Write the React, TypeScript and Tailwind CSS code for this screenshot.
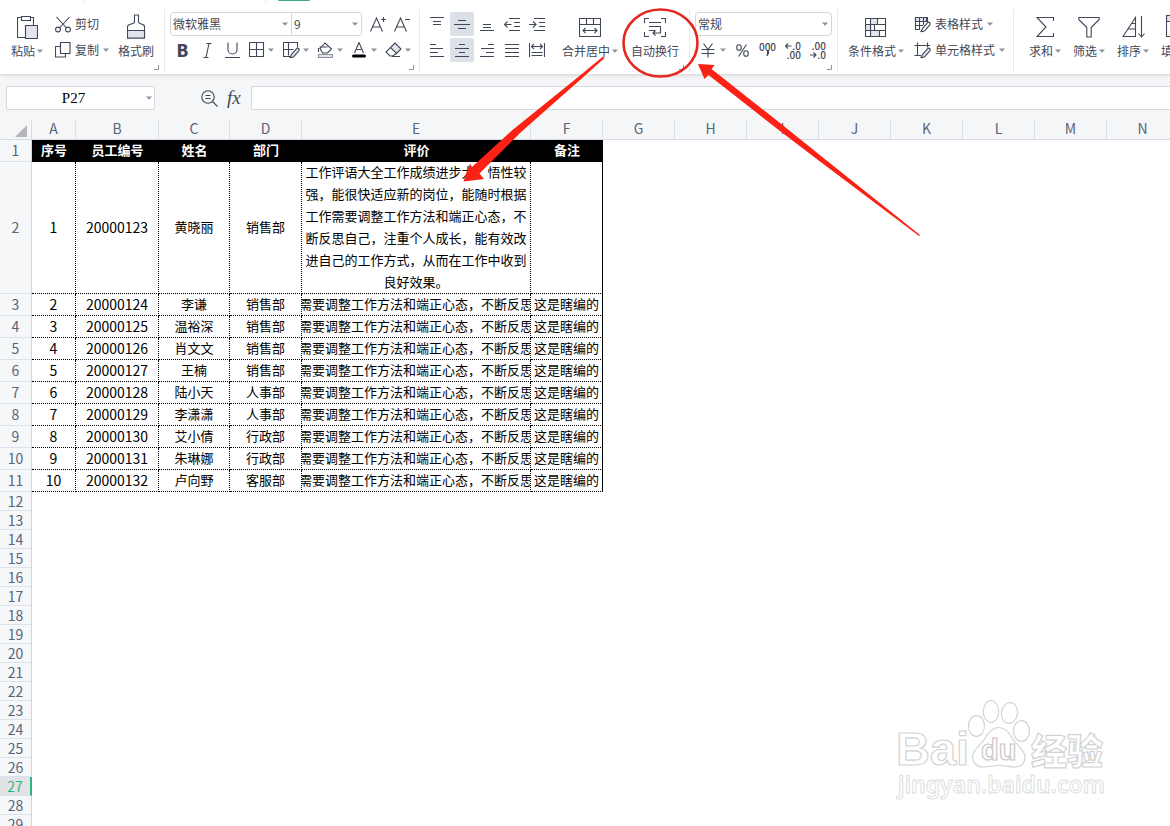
import type { ReactNode } from "react";

const fontStack = "font-['Noto_Sans_CJK_SC','Noto_Sans',sans-serif]";

function Icon({ w, h, children }: { w: number; h: number; children: ReactNode }) {
  return (
    <svg width={w} height={h} viewBox={`0 0 ${w} ${h}`} fill="none" stroke="#3f4858" strokeWidth="1.1" className="shrink-0" aria-hidden="true">
      {children}
    </svg>
  );
}

function Caret() {
  return (
    <svg width="6" height="4" viewBox="0 0 6 4" className="shrink-0" aria-hidden="true">
      <path d="M0 .5h6L3 3.8z" fill="#8b929d" />
    </svg>
  );
}

function Launcher() {
  return (
    <svg width="5" height="5" viewBox="0 0 5 5" className="absolute right-[5px] bottom-[2px]" aria-hidden="true">
      <path d="M0 4.5h4.5V0" fill="none" stroke="#8b929d" />
    </svg>
  );
}

function BigButton({ label, icon, caret = true }: { label: string; icon: ReactNode; caret?: boolean }) {
  return (
    <button type="button" className="flex shrink-0 flex-col items-center">
      <span className="flex h-[29px] items-center">{icon}</span>
      <span className="flex h-[20px] items-center gap-[2px] whitespace-nowrap">
        {label}
        {caret && <Caret />}
      </span>
    </button>
  );
}

function RowButton({ label, icon, caret = true }: { label: string; icon: ReactNode; caret?: boolean }) {
  return (
    <button type="button" className="flex h-6 items-center gap-[4px] whitespace-nowrap">
      {icon}
      {label}
      {caret && <Caret />}
    </button>
  );
}

function MenuIcon({ name, children }: { name: string; children: ReactNode }) {
  return (
    <button type="button" aria-label={name} className="flex h-6 w-[34px] items-center gap-[3px] pl-[4px]">
      {children}
      <Caret />
    </button>
  );
}

function Combo({ label, value, className }: { label: string; value: string; className: string }) {
  return (
    <label className={`grid h-6 items-center border border-[#d3d7dc] bg-white ${className}`}>
      <select aria-label={label} defaultValue={value} className="col-start-1 row-start-1 h-[22px] w-full appearance-none bg-transparent pl-[2px] text-[12px] outline-none">
        <option>{value}</option>
      </select>
      <span className="pointer-events-none col-start-1 row-start-1 mr-[3px] flex justify-self-end">
        <Caret />
      </span>
    </label>
  );
}

const alignments = [
  { name: "顶端对齐", d: "M1 1.5h14M4 5.5h8M4 8.5h8", on: false },
  { name: "垂直居中", d: "M4 4.5h8M0 8.5h16M4 12.5h8", on: true },
  { name: "底端对齐", d: "M4 8.5h8M4 11.5h8M1 14.5h14", on: false },
  { name: "减少缩进量", d: "M5 2.5h11M10 6.5h6M10 10.5h6M5 14.5h11M0.5 8.5h7M3.5 5.5l-3 3 3 3", on: false },
  { name: "增加缩进量", d: "M5 2.5h11M10 6.5h6M10 10.5h6M5 14.5h11M0 8.5h7M4 5.5l3 3-3 3", on: false },
  { name: "左对齐", d: "M1 2.5h6M1 6.5h13M1 10.5h8M1 14.5h14", on: false },
  { name: "水平居中", d: "M5 2.5h6M1 6.5h14M5 10.5h6M1 14.5h14", on: true },
  { name: "右对齐", d: "M9 2.5h6M2 6.5h13M7 10.5h8M1 14.5h14", on: false },
  { name: "两端对齐", d: "M1 2.5h14M1 6.5h14M1 10.5h14M1 14.5h14", on: false },
  { name: "分散对齐", d: "M.5 1v14M15.5 1v14M2.5 4.5h11M5 2l-2.5 2.5L5 7M11 2l2.5 2.5L11 7M2.5 10.5h11M2.5 13.5h11", on: false },
];

const penShape = "M15.5 6.5c1 .8.8 1.6.3 2.3l-4.8 5.5c-1.2 1.3-2.8 1.4-4 1.2.9-1 .8-2.2 1.8-3.3l4.6-5.3c.7-.8 1.4-1 2.1-.4z";

function Ribbon() {
  return (
    <header className="relative z-10 shrink-0 bg-white text-[12px] leading-[20px] text-[#3f4858] shadow-[0_1px_4px_rgba(0,0,0,0.16)]">
      <div className="flex h-[3px] items-start overflow-hidden">
        <span className="h-[3px] w-[85px] shrink-0 border-r border-[#e2e4e7]" />
        <span className="h-[3px] w-[181px] shrink-0 border-r border-[#e2e4e7]" />
        <span className="ml-3 h-[1px] w-8 rounded-b bg-[#3fa884]" />
      </div>
      <div className="flex h-[71px] overflow-hidden pt-[6px] pb-[2px]">
        <section className="relative flex w-[165px] shrink-0 gap-3 border-r border-[#e8eaed] pt-[3px] pl-[11px]">
          <BigButton
            label="粘贴"
            icon={
              <Icon w={21} h={24}>
                <path d="M4.5 2.5h-4v20h8M13.5 2.5h3v8M4.5 1.5h9v4h-9z" />
                <path d="M8.5 10.5h12v13h-12z" fill="#e2e5ee" />
              </Icon>
            }
          />
          <div className="flex w-[51px] flex-col gap-[2px]">
            <RowButton
              label="剪切"
              caret={false}
              icon={
                <Icon w={16} h={17}>
                  <path d="M1.5 1l10 11M14.5 1l-10 11" />
                  <circle cx="3" cy="13.5" r="2.4" />
                  <circle cx="13" cy="13.5" r="2.4" />
                </Icon>
              }
            />
            <RowButton
              label="复制"
              icon={
                <Icon w={16} h={16}>
                  <path d="M5.5.5h9.5v11H5.500zM5.500 4.500H.5v10.500h10V11.500" />
                </Icon>
              }
            />
          </div>
          <BigButton
            label="格式刷"
            caret={false}
            icon={
              <Icon w={19} h={25}>
                <path d="M7.500 1h4v7c0 2.500 6 1.500 6 4.500V24H.5V12.500c0-3 7-2 7-4.500z" />
                <path d="M.5 16.500h17V24H.5z" fill="#e2e5ee" />
              </Icon>
            }
          />
          <Launcher />
        </section>

        <section className="relative flex w-[255px] shrink-0 flex-col gap-[2px] border-r border-[#e8eaed] pt-[3px] pl-[5px]">
          <div className="flex items-center">
            <Combo label="字体" value="微软雅黑" className="w-[122px] rounded-l-sm" />
            <Combo label="字号" value="9" className="w-[70px] rounded-r-sm border-l-0" />
            <button type="button" aria-label="增大字号" className="ml-[8px] flex h-6 w-6 items-center">
              <Icon w={17} h={17}>
                <path d="M.5 15.500L6.500 2l6 13.500M2.500 11h8M11 3.500h5M13.500 1v5" />
              </Icon>
            </button>
            <button type="button" aria-label="减小字号" className="flex h-6 w-6 items-center">
              <Icon w={17} h={17}>
                <path d="M.5 15.500L6.500 2l6 13.500M2.500 11h8M11 3.500h5" />
              </Icon>
            </button>
          </div>
          <div className="flex items-center">
            <button type="button" className="h-6 w-[25px] text-[17px] leading-[22px] font-black">B</button>
            <button type="button" aria-label="倾斜" className="grid h-6 w-[25px] place-items-center">
              <Icon w={9} h={15}>
                <path d="M3.500.5h5M.5 14.500h5M6 .5L3 14.500" />
              </Icon>
            </button>
            <button type="button" aria-label="下划线" className="grid h-6 w-[25px] place-items-center">
              <Icon w={15} h={16}>
                <path d="M3 .5v7a4.500 4.500 0 0 0 9 0v-7M0 15.500h15" />
              </Icon>
            </button>
            <MenuIcon name="边框">
              <Icon w={16} h={16}>
                <path d="M.5.5h14v14H.5zM7.500.5v14M.5 7.500h14" />
              </Icon>
            </MenuIcon>
            <MenuIcon name="绘图边框">
              <Icon w={17} h={16}>
                <path d="M7 14.500H.5V.5h14v5M5.500.5v13M.5 7.500h10" />
                <path d={penShape} fill="#e2e5ee" />
              </Icon>
            </MenuIcon>
            <MenuIcon name="填充颜色">
              <Icon w={17} h={17}>
                <path d="M3 6.500L8 1l6.500 6-4 4H5.500zM2.500 5h8M1.500 6v4" />
                <path d="M1.500 12.500h14v3h-14z" fill="#e2e5ee" stroke="#8b929d" />
              </Icon>
            </MenuIcon>
            <MenuIcon name="字体颜色">
              <Icon w={17} h={16}>
                <path d="M3.500 11L8 .5 12.500 11M5 7.500h6" />
                <path d="M2.500 14h11" stroke="#000" strokeWidth="3" strokeLinecap="round" />
              </Icon>
            </MenuIcon>
            <MenuIcon name="清除">
              <Icon w={17} h={16}>
                <path d="M5.500 5.500L10 1l6 6-4.500 4.500z" fill="#e2e5ee" />
                <path d="M5.500 5.500L1 10l4 4h2.500l4-2.500M7 14.500h8" />
              </Icon>
            </MenuIcon>
          </div>
          <Launcher />
        </section>

        <section className="relative flex w-[270px] shrink-0 gap-[13px] border-r border-[#e8eaed] pt-[3px] pl-[5px]">
          <div className="grid h-[50px] grid-cols-5 gap-x-[1px] gap-y-[2px]">
            {alignments.map((a) => (
              <button key={a.name} type="button" aria-label={a.name} aria-pressed={a.on} className={`grid h-6 w-6 place-items-center rounded-xs ${a.on ? "bg-[#dce0e7]" : ""}`}>
                <Icon w={16} h={16}>
                  <path d={a.d} />
                </Icon>
              </button>
            ))}
          </div>
          <BigButton
            label="合并居中"
            icon={
              <Icon w={22} h={20}>
                <path d="M.5 1.500h21v18H.5zM.5 7.500h21M7.500 1.500v6M14.500 1.500v6M4 13.500h14M6.500 11L4 13.500 6.500 16M15.500 11l2.500 2.500-2.500 2.500" />
              </Icon>
            }
          />
          <BigButton
            label="自动换行"
            caret={false}
            icon={
              <Icon w={22} h={20}>
                <path d="M5 1.500H.5V6M17 1.500h4.500V6M5 19.500H.5V15M17 19.500h4.500V15M5 5.500h12M5 9.500h12M5 13.500h6M16.500 9.500v6.500h-7M11.500 13.500L9 16l2.500 2.500" />
              </Icon>
            }
          />
          <Launcher />
        </section>

        <section className="relative flex w-[148px] shrink-0 flex-col gap-[2px] border-r border-[#e8eaed] pt-[3px] pl-[5px]">
          <Combo label="数字格式" value="常规" className="w-[137px] rounded-sm" />
          <div className="flex items-center">
            <button type="button" aria-label="货币" className="flex h-6 w-[35px] items-center gap-[5px] pl-[6px]">
              <Icon w={14} h={15}>
                <path d="M2.500.5l4.500 6 4.500-6M7 6.500V14.500M.5 6.500h13M.5 10.500h13" />
              </Icon>
              <Caret />
            </button>
            <button type="button" aria-label="百分比" className="grid h-6 w-[25px] place-items-center">
              <Icon w={13} h={13}>
                <path d="M10.500.5l-8 12" />
                <ellipse cx="3" cy="3.500" rx="2.300" ry="2.800" />
                <ellipse cx="10" cy="9.500" rx="2.300" ry="2.800" />
              </Icon>
            </button>
            <button type="button" className="flex h-6 w-[25px] flex-col items-center pt-[4px] text-[10px] leading-[9px] font-medium">
              <span>000</span>
              <svg width="4" height="5" viewBox="0 0 4 5" aria-hidden="true">
                <path d="M1 0h2v2.500L1.500 5H.5L1 2z" fill="#3f4858" />
              </svg>
            </button>
            <button type="button" className="flex h-6 w-[25px] flex-col items-end justify-center pr-[4px] text-[10px] leading-[9px] font-medium">
              <span className="flex items-center">
                <Icon w={7} h={6}>
                  <path d="M0.500 3h6M3 .5L.5 3 3 5.500" />
                </Icon>
                .0
              </span>
              <span>.00</span>
            </button>
            <button type="button" className="flex h-6 w-[25px] flex-col items-end justify-center pr-[4px] text-[10px] leading-[9px] font-medium">
              <span>.00</span>
              <span className="flex items-center">
                <Icon w={7} h={6}>
                  <path d="M0 3h6M3.500.5L6 3 3.500 5.500" />
                </Icon>
                .0
              </span>
            </button>
          </div>
          <Launcher />
        </section>

        <section className="flex w-[176px] shrink-0 gap-[10px] border-r border-[#e8eaed] pt-[3px] pl-[10px]">
          <BigButton
            label="条件格式"
            icon={
              <Icon w={22} h={20}>
                <path d="M5.500 1.500h7v6h-7zM.5 7.500h5v6h-5zM5.500 13.500h9v6h-9z" fill="#e2e5ee" stroke="none" />
                <path d="M.5 1.500h20v18H.5zM.5 7.500h20M.5 13.500h20M5.500 1.500v18M12.500 1.500v6M9.500 7.500v6M14.500 13.500v6" />
              </Icon>
            }
          />
          <div className="flex flex-col gap-[2px]">
            <RowButton
              label="表格样式"
              icon={
                <Icon w={17} h={17}>
                  <path d="M1.500 1.500h11v4h-11z" fill="#e2e5ee" />
                  <path d="M6 13.500H1.500v-12h12V6M1.500 5.500h12M1.500 9.500H9M5.500 1.500v12M9.500 1.500V9" />
                  <path d={penShape} fill="#fff" />
                </Icon>
              }
            />
            <RowButton
              label="单元格样式"
              icon={
                <Icon w={17} h={17}>
                  <path d="M.5 3.500h15.500M3.500.5v13.500M.5 13.500H7M13.500.5v5" />
                  <path d={penShape} fill="#e2e5ee" />
                </Icon>
              }
            />
          </div>
        </section>

        <section className="flex shrink-0 gap-3 pt-[3px] pl-[15px]">
          <BigButton
            label="求和"
            icon={
              <Icon w={18} h={22}>
                <path d="M17.500 5V1.500H1L10 11 1 20.500h16.500V17" />
              </Icon>
            }
          />
          <BigButton
            label="筛选"
            icon={
              <Icon w={22} h={22}>
                <path d="M.8 1.500h20.400v2l-8 8v9.500H8.800v-9.500l-8-8z" />
              </Icon>
            }
          />
          <BigButton
            label="排序"
            icon={
              <Icon w={23} h={22}>
                <path d="M1 20.500L13.500 1.500v19zM9.500 7.500h4M6 13h7.500M19.500 0v21M16.500 17.500l3 3.500 3-3.500" />
              </Icon>
            }
          />
          <BigButton
            label="填充"
            icon={
              <Icon w={22} h={24}>
                <path d="M.5.5h21v6H.5z" fill="#e2e5ee" />
                <path d="M.5.5h21v21H.5zM.5 6.500h21" />
              </Icon>
            }
          />
        </section>
      </div>
    </header>
  );
}

function FormulaBar() {
  return (
    <div className="flex shrink-0 items-center pt-3 pb-[10px] pl-[6px]">
      <label className="grid h-6 w-[149px] shrink-0 items-center rounded-xs border border-[#d5d9de] bg-white">
        <input aria-label="名称框" defaultValue="P27" className="col-start-1 row-start-1 h-[22px] w-full bg-transparent pr-[14px] text-center font-['Liberation_Serif',serif] text-[15px] text-black outline-none" />
        <span className="pointer-events-none col-start-1 row-start-1 mr-[2px] flex justify-self-end">
          <Caret />
        </span>
      </label>
      <button type="button" aria-label="查找" className="ml-[46px]">
        <Icon w={17} h={17}>
          <circle cx="7" cy="7" r="6.200" />
          <path d="M4.500 5.500h5M4.500 8.500h5M11.500 11.500l5 5" />
        </Icon>
      </button>
      <button type="button" className="ml-[9px] w-[16px] text-left font-['Liberation_Serif',serif] text-[19px] leading-[22px] text-[#3f4858] italic">
        fx
      </button>
      <input aria-label="编辑栏" className="ml-[8px] h-6 min-w-0 flex-1 rounded-l-xs border border-r-0 border-[#d5d9de] bg-white px-2 outline-none" />
    </div>
  );
}

const remark = "工作评语大全工作成绩进步大，悟性较强，能很快适应新的岗位，能随时根据工作需要调整工作方法和端正心态，不断反思自己，注重个人成长，能有效改进自己的工作方式，从而在工作中收到良好效果。";
const remarkExcerpt = "需要调整工作方法和端正心态，不断反思";

const people: [string, string][] = [
  ["黄晓丽", "销售部"],
  ["李谦", "销售部"],
  ["温裕深", "销售部"],
  ["肖文文", "销售部"],
  ["王楠", "销售部"],
  ["陆小天", "人事部"],
  ["李潇潇", "人事部"],
  ["艾小倩", "行政部"],
  ["朱琳娜", "行政部"],
  ["卢向野", "客服部"],
];

const titles = ["序号", "员工编号", "姓名", "部门", "评价", "备注"];
const letters = "ABCDEFGHIJKLMN".split("");
const emptyRows = Array.from({ length: 18 }, (_, i) => i + 12);

function RowHead({ n }: { n: number }) {
  const active = n === 27;
  return (
    <th
      scope="row"
      className={`border-b px-0 pt-0 text-[14px] font-normal ${n < 12 ? "pb-[2px] leading-[18px]" : "pb-0 leading-[18px]"} ${
        active ? "border-r-2 border-b-[#dcdfe3] border-r-[#2bb67e] bg-[#e1e3e6] text-[#2bb67e]" : "border-r border-b-[#dbe2ec] border-r-[#c9d5e6] bg-[#f5f7f9] text-[#5b6478]"
      }`}
    >
      {n}
    </th>
  );
}

function Sheet() {
  const cell = "overflow-hidden border-r border-b border-dotted border-black bg-white px-0 pt-0 pb-[2px] whitespace-nowrap";
  return (
    <table className="w-[1179px] table-fixed border-separate border-spacing-0 text-center text-[13px] leading-[18px] text-black">
      <colgroup>
        <col className="w-[32px]" />
        <col className="w-[44px]" />
        <col className="w-[83px]" />
        <col className="w-[71px]" />
        <col className="w-[72px]" />
        <col className="w-[229px]" />
        {letters.slice(5).map((l) => (
          <col key={l} className="w-[72px]" />
        ))}
      </colgroup>
      <thead>
        <tr className="h-[20px] text-[14px] leading-[17px] text-[#5b6478]">
          <th aria-label="全选" className="border-r border-b border-[#d3dbe4] p-0">
            <svg width="12" height="12" viewBox="0 0 12 12" className="mt-[2px] ml-[15px]">
              <path d="M12 0v12H0z" fill="#b4b6b9" />
            </svg>
          </th>
          {letters.map((l) => (
            <th key={l} scope="col" className="border-r border-b border-r-[#dde1e7] border-b-[#d3dbe4] px-0 pt-0 pb-[2px] font-normal">
              {l}
            </th>
          ))}
        </tr>
      </thead>
      <tbody>
        <tr className="h-[22px]">
          <RowHead n={1} />
          {titles.map((t) => (
            <td key={t} className="bg-black px-0 pt-0 pb-[2px] font-bold text-white">
              {t}
            </td>
          ))}
          <td colSpan={8} className="bg-white p-0" />
        </tr>
        {people.map(([name, dept], i) => (
          <tr key={name} className={i === 0 ? "h-[132px]" : "h-[22px]"}>
            <RowHead n={i + 2} />
            <td className={`${cell} text-[14px]`}>{i + 1}</td>
            <td className={`${cell} text-[14px]`}>{20000123 + i}</td>
            <td className={cell}>{name}</td>
            <td className={cell}>{dept}</td>
            <td className={cell}>
              {i === 0 ? (
                <div className="flex h-[129px] items-center justify-center leading-[22px] whitespace-normal">{remark}</div>
              ) : (
                <div className="flex justify-center">
                  <span className="shrink-0">{remarkExcerpt}</span>
                </div>
              )}
            </td>
            <td className={`${cell} [border-right-style:solid]`}>{i === 0 ? "" : "这是瞎编的"}</td>
            <td colSpan={8} className="bg-white p-0" />
          </tr>
        ))}
        {emptyRows.map((n) => (
          <tr key={n} className="h-[19px]">
            <RowHead n={n} />
            <td colSpan={14} className="bg-white p-0" />
          </tr>
        ))}
      </tbody>
    </table>
  );
}

function Annotations() {
  return (
    <svg width="930" height="250" viewBox="0 0 930 250" className="pointer-events-none absolute top-0 left-0 z-20" aria-hidden="true">
      <ellipse cx="660.500" cy="43" rx="37" ry="33.500" fill="none" stroke="#e5281f" strokeWidth="2.600" />
      <path d="M463.500 181.500L470 163.500 472 167 512.500 130 580 75.500 603 56.500 604.500 58 580 80 520 133 479.500 173.500 484 179z" fill="#fb2115" />
      <path d="M698 64L714.500 65 711.500 69 780 123 826 160 920 235 919 236 818 160 780 131 708.500 75 704.500 79z" fill="#fb2115" />
    </svg>
  );
}

function Watermark() {
  return (
    <svg width="220" height="106" viewBox="0 0 220 106" className="pointer-events-none absolute right-[60px] bottom-[22px]" role="img" aria-label="Baidu 经验" fill="#fff" stroke="#d3d3d3" strokeWidth="1.200">
      <text x="6" y="67" fontSize="47" fontWeight="700" fontFamily="Liberation Sans, sans-serif">Bai</text>
      <ellipse cx="86.500" cy="28" rx="8" ry="10.300" />
      <ellipse cx="101" cy="13.500" rx="7.700" ry="11" />
      <ellipse cx="119.500" cy="15" rx="8" ry="10.500" transform="rotate(8 119.500 15)" />
      <ellipse cx="131.500" cy="33" rx="8" ry="10.300" />
      <path d="M108.500 29.500c7 0 11 5.500 14 11 4 6.500 12.500 11 12.500 19 0 6-5 10-11 9.500-6-.6-10-1.500-15.500-1.500s-9 1.500-15 1.500c-6.500 0-11-4-11-10 0-7.500 8-11.500 12-18 3-5.500 7-11.500 14-11.500z" />
      <text x="91" y="62" fontSize="29" fontWeight="700" fontFamily="Liberation Sans, sans-serif" stroke="#c8c8c8">du</text>
      <text x="141" y="67" fontSize="36" fontWeight="900" fontFamily="Noto Sans CJK SC, sans-serif">经验</text>
      <text x="8" y="95" fontSize="23" fontWeight="600" fontFamily="Noto Sans, sans-serif" strokeWidth=".9" stroke="#dcdcdc">jingyan.baidu.com</text>
    </svg>
  );
}

export default function App() {
  return (
    <div lang="zh-CN" className={`relative flex h-screen flex-col overflow-hidden bg-[#f5f6f8] ${fontStack}`}>
      <Ribbon />
      <FormulaBar />
      <main className="min-h-0 flex-1 overflow-hidden bg-[#f5f6f8]">
        <Sheet />
      </main>
      <Annotations />
      <Watermark />
    </div>
  );
}
